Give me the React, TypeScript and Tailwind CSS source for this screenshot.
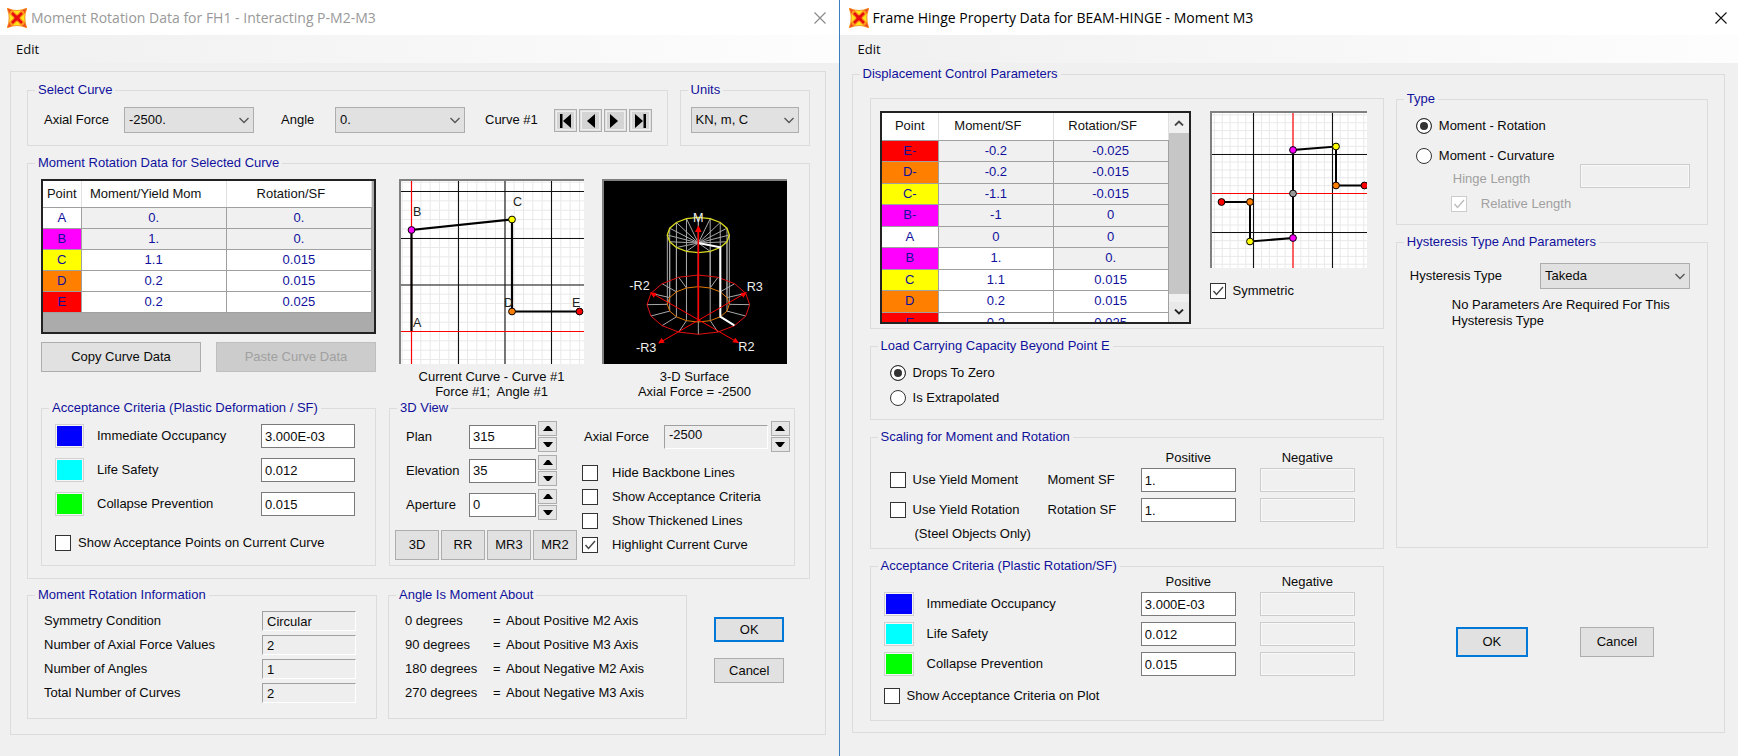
import { useId, type ReactNode } from "react";
import { clsx } from "clsx";

type Row = { point: string; tone: string; moment: string; rotation: string; locked?: "all" | "rotation" };

const curveRows: Row[] = [
    { point: "A", tone: "bg-white", moment: "0.", rotation: "0.", locked: "all" },
    { point: "B", tone: "bg-[#ff00ff]", moment: "1.", rotation: "0.", locked: "all" },
    { point: "C", tone: "bg-[#ffff00]", moment: "1.1", rotation: "0.015" },
    { point: "D", tone: "bg-[#ff8000]", moment: "0.2", rotation: "0.015" },
    { point: "E", tone: "bg-[#ff0000]", moment: "0.2", rotation: "0.025" },
];

const hingeRows: Row[] = [
    { point: "E-", tone: "bg-[#ff0000]", moment: "-0.2", rotation: "-0.025", locked: "all" },
    { point: "D-", tone: "bg-[#ff8000]", moment: "-0.2", rotation: "-0.015", locked: "all" },
    { point: "C-", tone: "bg-[#ffff00]", moment: "-1.1", rotation: "-0.015", locked: "all" },
    { point: "B-", tone: "bg-[#ff00ff]", moment: "-1", rotation: "0", locked: "all" },
    { point: "A", tone: "bg-white", moment: "0", rotation: "0", locked: "all" },
    { point: "B", tone: "bg-[#ff00ff]", moment: "1.", rotation: "0.", locked: "rotation" },
    { point: "C", tone: "bg-[#ffff00]", moment: "1.1", rotation: "0.015" },
    { point: "D", tone: "bg-[#ff8000]", moment: "0.2", rotation: "0.015" },
    { point: "E", tone: "bg-[#ff0000]", moment: "0.2", rotation: "0.025" },
];

const criteria = [
    { label: "Immediate Occupancy", tone: "bg-[#0000ff]", value: "3.000E-03" },
    { label: "Life Safety", tone: "bg-[#00ffff]", value: "0.012" },
    { label: "Collapse Prevention", tone: "bg-[#00ff00]", value: "0.015" },
];

/* ---------- controls ---------- */

function Group({ title, className, children }: { title: string; className?: string; children: ReactNode }) {
    return (
        <fieldset className={clsx("min-w-0 border border-[#dcdcdc]", className)}>
            <legend className="ml-[7px] px-[3px] leading-4 whitespace-nowrap text-[#10109c]">{title}</legend>
            {children}
        </fieldset>
    );
}

function SelectBox({ id, value, className }: { id: string; value: string; className?: string }) {
    return (
        <div className={clsx("relative h-[26px] shrink-0", className)}>
            <select
                id={id}
                aria-label={id}
                className="h-full w-full appearance-none border border-[#adadad] bg-[#e1e1e1] pl-1 outline-none"
            >
                <option>{value}</option>
            </select>
            <svg className="pointer-events-none absolute right-1 top-2 h-[10px] w-3" viewBox="0 0 12 10" fill="none">
                <path d="M1.500 3l4.500 4.500L10.500 3" stroke="#555" strokeWidth="1.3" />
            </svg>
        </div>
    );
}

function Field({ id, label, value, disabled, className }: { id?: string; label?: string; value?: string; disabled?: boolean; className?: string }) {
    return (
        <input
            id={id}
            aria-label={label}
            type="text"
            defaultValue={value}
            disabled={disabled}
            className={clsx(
                "h-6 shrink-0 border px-[3px] outline-none",
                disabled ? "border-[#cccccc] bg-[#f0f0f0] shadow-[inset_0_0_0_1px_#f8f8f8]" : "border-[#7a7a7a] bg-white",
                className,
            )}
        />
    );
}

function Sunken({ id, value, className }: { id: string; value: string; className?: string }) {
    return (
        <input
            id={id}
            readOnly
            defaultValue={value}
            className={clsx(
                "border border-t-[#a0a0a0] border-l-[#a0a0a0] border-r-white border-b-white bg-[#eeeeee] px-1 outline-none",
                className,
            )}
        />
    );
}

function Check({ label, checked, disabled, gap = "gap-[7px]" }: { label: string; checked?: boolean; disabled?: boolean; gap?: string }) {
    const id = useId();
    return (
        <div className={clsx("flex items-center", gap, disabled && "text-[#a0a0a0]")}>
            <span className="relative h-4 w-4 shrink-0">
                <input
                    id={id}
                    type="checkbox"
                    defaultChecked={checked}
                    disabled={disabled}
                    className="peer block h-4 w-4 appearance-none border border-[#333] bg-white disabled:border-[#ccc]"
                />
                <svg
                    className="pointer-events-none absolute inset-0 hidden h-4 w-4 peer-checked:block"
                    viewBox="0 0 16 16"
                    fill="none"
                >
                    <path d="M3.500 8l3 3.500 6.500-7.500" stroke={disabled ? "#bcbcbc" : "#444"} strokeWidth="1.4" />
                </svg>
            </span>
            <label htmlFor={id} className="whitespace-nowrap">{label}</label>
        </div>
    );
}

function Radio({ name, label, checked }: { name: string; label: string; checked?: boolean }) {
    return (
        <label className="flex h-4 items-center gap-[7px] whitespace-nowrap">
            <input
                type="radio"
                name={name}
                defaultChecked={checked}
                className="h-4 w-4 shrink-0 appearance-none rounded-full border border-[#333] bg-white checked:bg-[#333] checked:shadow-[inset_0_0_0_3px_#fff]"
            />
            {label}
        </label>
    );
}

function PushButton({ children, primary, disabled, className }: { children: ReactNode; primary?: boolean; disabled?: boolean; className?: string }) {
    return (
        <button
            type="button"
            disabled={disabled}
            className={clsx(
                "flex shrink-0 items-center justify-center whitespace-nowrap",
                primary ? "border-2 border-[#0078d7]" : "border",
                !primary && (disabled ? "border-[#bfbfbf]" : "border-[#adadad]"),
                disabled ? "bg-[#cccccc] text-[#a0a0a0]" : "bg-[#e1e1e1]",
                className,
            )}
        >
            {children}
        </button>
    );
}

function Spinner({ label }: { label: string }) {
    return (
        <div className="flex w-[19px] shrink-0 flex-col gap-px">
            <button type="button" aria-label={`${label} up`} className="flex h-[15px] items-center justify-center border border-[#adadad] bg-[#e6e6e6]">
                <svg width="10" height="5" viewBox="0 0 10 5"><path d="M4 0h2l4 5H0z" fill="#000" /></svg>
            </button>
            <button type="button" aria-label={`${label} down`} className="flex h-[15px] items-center justify-center border border-[#adadad] bg-[#e6e6e6]">
                <svg width="10" height="5" viewBox="0 0 10 5"><path d="M0 0h10L6 5H4z" fill="#000" /></svg>
            </button>
        </div>
    );
}

function Swatch({ tone, className }: { tone: string; className?: string }) {
    return (
        <span className={clsx("block h-6 shrink-0 border border-[#d0d0d0] bg-[#f6f6f6] p-px", className)}>
            <span className={clsx("block h-full w-full", tone)} />
        </span>
    );
}

/* ---------- window chrome ---------- */

function AppIcon() {
    return (
        <svg className="h-5 w-5 shrink-0" viewBox="0 0 20 20">
            <path d="M.5.5Q10 4.500 19.500.5 16 10 19.500 19.500 10 15.500.5 19.500 4 10 .5.5z" fill="#ffe81a" stroke="#f79a2a" strokeWidth="1.2" />
            <path d="M.5.5l5.500 2-3.500 3.500zM19.500.5l-5.500 2 3.500 3.500zM.5 19.500l5.500-2-3.500-3.500zM19.500 19.500l-5.500-2 3.500-3.500z" fill="#f04a22" />
            <path d="M5 5l10 10M15 5L5 15" stroke="#ff9a1c" strokeWidth="5" strokeLinecap="round" />
            <path d="M5 5l10 10M15 5L5 15" stroke="#e60f0f" strokeWidth="2.6" />
            <circle cx="10" cy="10" r="2.6" fill="#e60f0f" />
        </svg>
    );
}

function TitleBar({ title, inactive, className }: { title: string; inactive?: boolean; className: string }) {
    return (
        <header className={clsx("flex h-[35px] items-center bg-white font-['Open_Sans','Noto_Sans',sans-serif] text-[14px]", className)}>
            <AppIcon />
            <h1 className={clsx("ml-1 flex-1 whitespace-nowrap", inactive ? "text-[#999]" : "text-black")}>{title}</h1>
            <button type="button" aria-label="Close" className={clsx("p-px", inactive ? "text-[#888]" : "text-[#111]")}>
                <svg width="12" height="12" viewBox="0 0 12 12" fill="none">
                    <path d="M.5.5l11 11M11.500.5l-11 11" stroke="currentColor" strokeWidth="1.1" />
                </svg>
            </button>
        </header>
    );
}

function MenuBar({ className }: { className: string }) {
    return (
        <nav className={clsx("flex h-7 items-center bg-linear-to-r from-[#f0f0f0] to-[#fdfdfd] font-['Open_Sans','Noto_Sans',sans-serif] text-[13px]", className)}>
            <button type="button">Edit</button>
        </nav>
    );
}

/* ---------- data grid ---------- */

function PointTable({ rows, headers, pointCol, className, headClass, rowClass }: {
    rows: Row[];
    headers: string[];
    pointCol: string;
    className?: string;
    headClass: string;
    rowClass?: string;
}) {
    return (
        <table className={clsx("w-full table-fixed border-collapse text-center text-[#10109c]", className)}>
            <thead>
                <tr className={clsx("bg-white text-[#111]", headClass)}>
                    {headers.map((h, i) => (
                        <th
                            key={h}
                            className={clsx(
                                "border-r border-b border-r-[#e0e0e0] border-b-[#a0a0a0] py-0 pl-0 font-normal",
                                i === 0 ? pointCol : "pr-4",
                            )}
                        >
                            {h}
                        </th>
                    ))}
                </tr>
            </thead>
            <tbody>
                {rows.map((r) => (
                    <tr key={r.point} className={rowClass}>
                        <td className={clsx("border-r border-b border-[#a0a0a0] p-0", r.tone)}>{r.point}</td>
                        <td className={clsx("border-r border-b border-[#a0a0a0] p-0", r.locked === "all" ? "bg-[#f0f0f0]" : "bg-white")}>{r.moment}</td>
                        <td className={clsx("border-r border-b border-[#a0a0a0] p-0", r.locked ? "bg-[#f0f0f0]" : "bg-white")}>{r.rotation}</td>
                    </tr>
                ))}
            </tbody>
        </table>
    );
}

/* ---------- plots ---------- */

function Dot({ x, y, fill, r = 3.4 }: { x: number; y: number; fill: string; r?: number }) {
    return <circle cx={x} cy={y} r={r} fill={fill} stroke="#000" strokeWidth="1" />;
}

function MinorGrid({ size, step, x0, y0 }: { size: number; step: number; x0: number; y0: number }) {
    const lines = (start: number) => {
        const out: number[] = [];
        for (let v = start % step; v < size; v += step) out.push(v);
        return out;
    };
    return (
        <g stroke="#e9e9e9" strokeWidth="1">
            {lines(x0).map((x) => <path key={`v${x}`} d={`M${x} 0V${size}`} />)}
            {lines(y0).map((y) => <path key={`h${y}`} d={`M0 ${y}H${size}`} />)}
        </g>
    );
}

function CurvePlot() {
    return (
        <svg className="block h-[183px] w-[183px] bg-white" viewBox="0 0 183 183" fontSize="12.500" fill="#222">
            <MinorGrid size={183} step={9.33} x0={10.5} y0={150.5} />
            <g stroke="#111" strokeWidth="1.1">
                <path d="M57.500 0V183M104 0V183M150.500 0V183M0 10.500H183M0 57.500H183M0 104H183" />
            </g>
            <path d="M10.500 0V183M0 150.500H183" stroke="#f00" strokeWidth="1.2" />
            <path d="M10.500 150V49L111 38.500V130.500H178.500" fill="none" stroke="#000" strokeWidth="2.2" />
            <Dot x={10.5} y={49} fill="#ff00ff" />
            <Dot x={111} y={38.5} fill="#ffff00" />
            <Dot x={111} y={130.5} fill="#ff8000" />
            <Dot x={178.5} y={130.5} fill="#ff0000" />
            <text x="12" y="35">B</text>
            <text x="112" y="24.500">C</text>
            <text x="103" y="126">D</text>
            <text x="171" y="126">E</text>
            <text x="12" y="146">A</text>
        </svg>
    );
}

function HingePlot() {
    return (
        <svg className="block h-[155px] w-[155px] bg-white" viewBox="0 0 155 155">
            <MinorGrid size={155} step={7.86} x0={81} y0={80.5} />
            <path d="M41.500 0V155M120.500 0V155M0 41.500H155M0 119.500H155" stroke="#111" strokeWidth="1.1" />
            <path d="M81 0V155M0 80.500H155" stroke="#f00" strokeWidth="1.2" />
            <path d="M9.500 89H38V128.500L81 125V37L124 33.500V72.500H153" fill="none" stroke="#000" strokeWidth="2" />
            <Dot x={9.5} y={89} fill="#ff0000" />
            <Dot x={38} y={89} fill="#ff8000" />
            <Dot x={38} y={128.5} fill="#ffff00" />
            <Dot x={81} y={125} fill="#ff00ff" />
            <Dot x={81} y={80.5} fill="#999" />
            <Dot x={81} y={37} fill="#ff00ff" />
            <Dot x={124} y={33.5} fill="#ffff00" />
            <Dot x={124} y={72.5} fill="#ff8000" />
            <Dot x={152.5} y={72.5} fill="#ff0000" />
        </svg>
    );
}

// Sixteen backbone curves swept round the moment axis.
const spokes = Array.from({ length: 16 }, (_, i) => {
    const a = (i * Math.PI) / 8;
    return { c: Math.cos(a), s: Math.sin(a) };
});
const ring = (cy: number, rx: number, ry: number) =>
    spokes.map(({ c, s }) => `${(295 + rx * c).toFixed(1)},${(cy + ry * s).toFixed(1)}`).join(" ");

function SurfacePlot() {
    return (
        <svg className="block h-[183px] w-[183px] bg-black" viewBox="12 17 549 549" fill="none" strokeWidth="3">
            <g stroke="#a8a8a8">
                {spokes.map(({ c, s }, i) => (
                    <path
                        key={i}
                        d={`M295 203L${295 + 93 * c} ${179 + 53 * s}V${387 + 53 * s}L${295 + 154 * c} ${388 + 89 * s}`}
                    />
                ))}
            </g>
            <polygon points={ring(388, 154, 89)} stroke="#e01010" />
            <polygon points={ring(387, 93, 53)} stroke="#e07800" />
            <polygon points={ring(179, 93, 53)} stroke="#d8d820" strokeWidth="4" />
            <path d="M295 203L361 216V424L403 450" stroke="#fff" strokeWidth="6" />
            <g stroke="#f00">
                <path d="M295 437V160" strokeWidth="5" />
                <path d="M415 502L155 353M177 503L437 353" />
            </g>
            <g fill="#f00">
                <path d="M295 150l10 20h-20zM150 351l20 2-9 14zM441 351l-20 2 9 14zM417 503l-20-2 9-14zM174 504l20-2-9-14z" />
            </g>
            <g fill="#eee" fontSize="38" stroke="none">
                <text x="295" y="139" textAnchor="middle">M</text>
                <text x="88" y="344">-R2</text>
                <text x="440" y="347">R3</text>
                <text x="108" y="529">-R3</text>
                <text x="415" y="526">R2</text>
            </g>
        </svg>
    );
}

function PlotFrame({ children }: { children: ReactNode }) {
    return (
        <div className="w-max border-t-2 border-l-2 border-[#808080]">{children}</div>
    );
}

/* ---------- dialogs ---------- */

const navIcons = [
    { label: "First", d: "M5 4h2.500v14H5zM16 4v14l-8-7z" },
    { label: "Previous", d: "M15 4v14l-8-7z" },
    { label: "Next", d: "M5 4v14l8-7z" },
    { label: "Last", d: "M5 4v14l8-7zM13.500 4H16v14h-2.500z" },
];

function SelectCurve() {
    return (
        <Group title="Select Curve" className="flex-1">
            <div className="flex items-center pt-[9px] pb-3 pl-4">
                <label htmlFor="axial" className="w-[80px]">Axial Force</label>
                <SelectBox id="axial" value="-2500." className="w-[130px]" />
                <label htmlFor="angle" className="ml-[27px] w-[54px]">Angle</label>
                <SelectBox id="angle" value="0." className="w-[130px]" />
                <span className="ml-5 w-[69px] whitespace-nowrap">Curve #1</span>
                <div className="flex gap-[2px]">
                    {navIcons.map((n) => (
                        <button key={n.label} type="button" aria-label={n.label} className="border border-[#adadad] bg-[#e1e1e1]">
                            <svg width="21" height="21" viewBox="0 0 21 21" className="block">
                                <rect x="1.500" y="1.500" width="18" height="18" fill="#d4d4d4" stroke="#eee" />
                                <path d={n.d} fill="#000" />
                            </svg>
                        </button>
                    ))}
                </div>
            </div>
        </Group>
    );
}

function CurveAcceptance() {
    return (
        <Group title="Acceptance Criteria (Plastic Deformation / SF)">
            <div className="flex flex-col gap-[10px] pt-2 pr-5 pl-[13px]">
                {criteria.map((c, i) => (
                    <div key={c.label} className="flex items-center">
                        <Swatch tone={c.tone} className="w-[29px]" />
                        <label htmlFor={`curve-ac-${i}`} className="ml-[13px] flex-1">{c.label}</label>
                        <Field id={`curve-ac-${i}`} value={c.value} className="w-[94px]" />
                    </div>
                ))}
            </div>
            <div className="pt-[19px] pl-[13px]">
                <Check label="Show Acceptance Points on Current Curve" />
            </div>
        </Group>
    );
}

const viewAngles = [
    { label: "Plan", value: "315" },
    { label: "Elevation", value: "35" },
    { label: "Aperture", value: "0" },
];

function View3D() {
    return (
        <Group title="3D View">
            <div className="flex gap-1 pt-[5px] pr-1 pb-[5px] pl-[5px]">
                <div className="w-[183px] shrink-0">
                    <div className="flex flex-col gap-[3px]">
                        {viewAngles.map((v) => (
                            <div key={v.label} className="flex items-center pl-[11px]">
                                <label htmlFor={v.label} className="w-[63px]">{v.label}</label>
                                <Field id={v.label} value={v.value} className="mr-[2px] w-[67px]" />
                                <Spinner label={v.label} />
                            </div>
                        ))}
                    </div>
                    <div className="mt-[10px] flex gap-[2px]">
                        {["3D", "RR", "MR3", "MR2"].map((b) => (
                            <PushButton key={b} className="h-[30px] w-11">{b}</PushButton>
                        ))}
                    </div>
                </div>
                <div className="flex-1">
                    <div className="flex items-center">
                        <label htmlFor="view-axial" className="w-[82px] pl-[2px] whitespace-nowrap">Axial Force</label>
                        <Sunken id="view-axial" value="-2500" className="mr-[3px] h-6 w-0 flex-1 pb-1" />
                        <Spinner label="Axial Force" />
                    </div>
                    <div className="mt-[13px] flex flex-col gap-2">
                        <Check label="Hide Backbone Lines" gap="gap-[14px]" />
                        <Check label="Show Acceptance Criteria" gap="gap-[14px]" />
                        <Check label="Show Thickened Lines" gap="gap-[14px]" />
                        <Check label="Highlight Current Curve" checked gap="gap-[14px]" />
                    </div>
                </div>
            </div>
        </Group>
    );
}

const info = [
    ["Symmetry Condition", "Circular"],
    ["Number of Axial Force Values", "2"],
    ["Number of Angles", "1"],
    ["Total Number of Curves", "2"],
];

const angles = [
    ["0 degrees", "About Positive M2 Axis"],
    ["90 degrees", "About Positive M3 Axis"],
    ["180 degrees", "About Negative M2 Axis"],
    ["270 degrees", "About Negative M3 Axis"],
];

function MomentRotationDialog() {
    return (
        <section className="flex-[839] bg-[#f0f0f0]">
            <TitleBar title="Moment Rotation Data for FH1 - Interacting P-M2-M3" inactive className="pr-3 pl-[7px]" />
            <MenuBar className="pl-4" />
            <div className="mt-2 mr-[13px] ml-[10px] border border-[#dcdcdc] pt-[10px] pr-[15px] pb-[15px] pl-4">
                <div className="flex gap-3">
                    <SelectCurve />
                    <Group title="Units" className="w-[130px] shrink-0">
                        <div className="pt-[9px] pl-[10px]">
                            <SelectBox id="Units" value="KN, m, C" className="w-[108px]" />
                        </div>
                    </Group>
                </div>

                <Group title="Moment Rotation Data for Selected Curve" className="mt-[9px]">
                    <div className="grid grid-cols-[335px_1fr] gap-x-[13px] gap-y-px pt-2 pr-[14px] pb-3 pl-[13px]">
                        <div>
                            <div className="h-[155px] border-2 border-[#222] bg-[#ababab] pr-[2px]">
                                <PointTable
                                    rows={curveRows}
                                    headers={["Point", "Moment/Yield Mom", "Rotation/SF"]}
                                    pointCol="w-[38px]"
                                    headClass="h-[26px]"
                                    rowClass="h-[21px]"
                                />
                            </div>
                            <div className="mt-2 flex justify-between">
                                <PushButton className="h-[30px] w-40">Copy Curve Data</PushButton>
                                <PushButton disabled className="h-[30px] w-40">Paste Curve Data</PushButton>
                            </div>
                        </div>
                        <div className="flex gap-[18px] pl-[10px] text-center leading-[15px]">
                            <figure>
                                <PlotFrame><CurvePlot /></PlotFrame>
                                <figcaption className="mt-[5px]">
                                    Current Curve - Curve #1<br />Force #1;&nbsp; Angle #1
                                </figcaption>
                            </figure>
                            <figure>
                                <PlotFrame><SurfacePlot /></PlotFrame>
                                <figcaption className="mt-[5px]">3-D Surface<br />Axial Force = -2500</figcaption>
                            </figure>
                        </div>
                        <CurveAcceptance />
                        <View3D />
                    </div>
                </Group>

                <div className="mt-2 flex">
                    <Group title="Moment Rotation Information" className="w-[350px] shrink-0">
                        <div className="flex flex-col gap-1 pt-2 pr-5 pb-[15px] pl-4">
                            {info.map(([label, value]) => (
                                <div key={label} className="flex items-center justify-between">
                                    <label htmlFor={label}>{label}</label>
                                    <Sunken id={label} value={value} className="h-5 w-[94px]" />
                                </div>
                            ))}
                        </div>
                    </Group>
                    <Group title="Angle Is Moment About" className="ml-[11px] w-[299px] shrink-0">
                        <dl className="grid grid-cols-[88px_13px_1fr] gap-y-1 pt-2 pl-4 leading-5">
                            {angles.map(([deg, axis]) => (
                                <div key={deg} className="contents">
                                    <dt>{deg}</dt>
                                    <dd>=</dd>
                                    <dd>{axis}</dd>
                                </div>
                            ))}
                        </dl>
                    </Group>
                    <div className="flex flex-1 flex-col items-center gap-4 pt-[30px] pl-[2px]">
                        <PushButton primary className="h-[25px] w-[70px]">OK</PushButton>
                        <PushButton className="h-[25px] w-[70px]">Cancel</PushButton>
                    </div>
                </div>
            </div>
        </section>
    );
}

function ScrollBar() {
    return (
        <div className="flex w-5 shrink-0 flex-col bg-[#f0f0f0]">
            <button type="button" aria-label="Scroll up" className="flex h-5 items-center justify-center">
                <svg width="10" height="6" viewBox="0 0 10 6" fill="none"><path d="M1 5.500l4-4 4 4" stroke="#444" strokeWidth="1.8" /></svg>
            </button>
            <div className="h-[161px] bg-[#c6c6c6]" />
            <div className="flex-1" />
            <button type="button" aria-label="Scroll down" className="flex h-5 items-center justify-center bg-[#e9e9e9]">
                <svg width="10" height="6" viewBox="0 0 10 6" fill="none"><path d="M1 .5l4 4 4-4" stroke="#222" strokeWidth="1.8" /></svg>
            </button>
        </div>
    );
}

function PosNegHead() {
    return (
        <div className="flex justify-end gap-6 text-center leading-4">
            <span className="w-[95px]">Positive</span>
            <span className="w-[95px]">Negative</span>
        </div>
    );
}

function HingeColumn() {
    return (
        <div className="flex min-w-0 flex-[514] flex-col pt-4">
            <div className="flex h-[231px] border border-[#dcdcdc] pt-3 pl-[9px]">
                <div className="flex h-[213px] w-[311px] shrink-0 overflow-hidden border-2 border-[#222] bg-white">
                    <div className="min-w-0 flex-1">
                        <PointTable
                            rows={hingeRows}
                            headers={["Point", "Moment/SF", "Rotation/SF"]}
                            pointCol="w-[57px]"
                            className="h-[221px]"
                            headClass="h-[27px]"
                        />
                    </div>
                    <ScrollBar />
                </div>
                <div className="ml-[19px]">
                    <PlotFrame><HingePlot /></PlotFrame>
                    <div className="mt-[15px]">
                        <Check label="Symmetric" checked />
                    </div>
                </div>
            </div>

            <Group title="Load Carrying Capacity Beyond Point E" className="mt-[9px]">
                <div className="flex flex-col gap-[9px] pt-[11px] pb-[13px] pl-[19px]">
                    <Radio name="capacity" label="Drops To Zero" checked />
                    <Radio name="capacity" label="Is Extrapolated" />
                </div>
            </Group>

            <Group title="Scaling for Moment and Rotation" className="mt-[9px]">
                <div className="flex flex-col pt-[5px] pr-7 pb-[6px] pl-[19px]">
                    <PosNegHead />
                    <div className="mt-[2px] flex items-center">
                        <div className="w-[158px]"><Check label="Use Yield Moment" /></div>
                        <label htmlFor="moment-sf" className="flex-1">Moment SF</label>
                        <Field id="moment-sf" value="1." className="w-[95px]" />
                        <Field label="Negative moment SF" disabled className="ml-6 w-[95px]" />
                    </div>
                    <div className="mt-[6px] flex items-center">
                        <div className="w-[158px]"><Check label="Use Yield Rotation" /></div>
                        <label htmlFor="rotation-sf" className="flex-1">Rotation SF</label>
                        <Field id="rotation-sf" value="1." className="w-[95px]" />
                        <Field label="Negative rotation SF" disabled className="ml-6 w-[95px]" />
                    </div>
                    <p className="mt-1 pl-[25px] leading-4">(Steel Objects Only)</p>
                </div>
            </Group>

            <Group title="Acceptance Criteria (Plastic Rotation/SF)" className="mt-[9px]">
                <div className="pr-7 pb-4 pl-[13px]">
                    <PosNegHead />
                    <div className="mt-[2px] flex flex-col gap-[6px]">
                        {criteria.map((c, i) => (
                            <div key={c.label} className="flex items-center">
                                <Swatch tone={c.tone} className="w-[30px]" />
                                <label htmlFor={`hinge-ac-${i}`} className="ml-[13px] flex-1">{c.label}</label>
                                <Field id={`hinge-ac-${i}`} value={c.value} className="w-[95px]" />
                                <Field label={`${c.label} negative`} disabled className="ml-6 w-[95px]" />
                            </div>
                        ))}
                    </div>
                    <div className="mt-3">
                        <Check label="Show Acceptance Criteria on Plot" />
                    </div>
                </div>
            </Group>
        </div>
    );
}

function HingeSide() {
    return (
        <div className="flex min-w-0 flex-[312] flex-col pt-[9px]">
            <Group title="Type">
                <div className="pt-[11px] pr-[17px] pb-3 pl-[19px]">
                    <div className="flex flex-col gap-[14px]">
                        <Radio name="type" label="Moment - Rotation" checked />
                        <Radio name="type" label="Moment - Curvature" />
                    </div>
                    <div className="flex items-center text-[#a0a0a0]">
                        <label htmlFor="hinge-length" className="flex-1 pt-[6px] pl-[37px]">Hinge Length</label>
                        <Field id="hinge-length" disabled className="w-[110px]" />
                    </div>
                    <div className="mt-2 pl-[35px]">
                        <Check label="Relative Length" checked disabled gap="gap-[14px]" />
                    </div>
                </div>
            </Group>
            <Group title="Hysteresis Type And Parameters" className="mt-[9px]">
                <div className="min-h-[297px] pt-[13px] pr-[17px] pl-[13px]">
                    <div className="flex items-center justify-between">
                        <label htmlFor="hysteresis">Hysteresis Type</label>
                        <SelectBox id="hysteresis" value="Takeda" className="w-[150px]" />
                    </div>
                    <p className="mt-2 pl-[42px] leading-4">
                        No Parameters Are Required For This Hysteresis Type
                    </p>
                </div>
            </Group>
            <div className="mt-[79px] flex justify-center gap-[52px] pl-[6px]">
                <PushButton primary className="h-[30px] w-[72px]">OK</PushButton>
                <PushButton className="h-[30px] w-[74px]">Cancel</PushButton>
            </div>
        </div>
    );
}

function FrameHingeDialog() {
    return (
        <section className="flex-[899] border-l border-[#3a7ebf] bg-[#f0f0f0]">
            <TitleBar title="Frame Hinge Property Data for BEAM-HINGE - Moment M3" className="pr-[10px] pl-[9px]" />
            <MenuBar className="pl-[18px]" />
            <Group title="Displacement Control Parameters" className="mt-[3px] mr-[13px] ml-3">
                <div className="flex gap-3 pr-4 pb-[11px] pl-[17px]">
                    <HingeColumn />
                    <HingeSide />
                </div>
            </Group>
        </section>
    );
}

export default function App() {
    return (
        <main className="flex min-h-screen bg-[#f0f0f0] font-['Liberation_Sans',Arial,sans-serif] text-[13px] leading-4 text-[#0a0a0a]">
            <MomentRotationDialog />
            <FrameHingeDialog />
        </main>
    );
}
